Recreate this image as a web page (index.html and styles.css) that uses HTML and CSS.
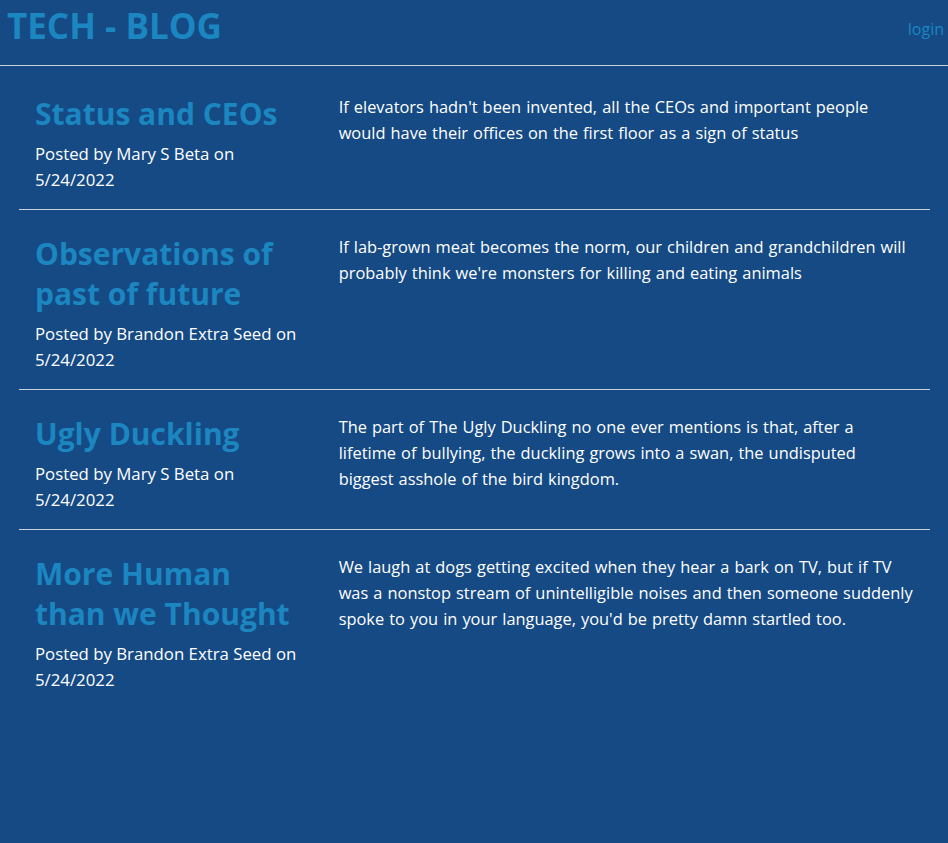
FILE: index.html
```html
<!DOCTYPE html>
<html lang="en">
<head>
<meta charset="utf-8">
<title>Tech - Blog</title>
<link rel="stylesheet" href="styles.css">
</head>
<body>
<header class="site-header">
  <h1 class="brand">TECH - BLOG</h1>
  <nav class="nav"><a class="nav-link" href="#">login</a></nav>
</header>
<main class="posts">
  <article class="post">
    <div class="post-meta">
      <h2 class="post-title">Status and CEOs</h2>
      <p class="post-by">Posted by Mary S Beta on 5/24/2022</p>
    </div>
    <p class="post-body">If elevators hadn't been invented, all the CEOs and important people would have their offices on the first floor as a sign of status</p>
  </article>
  <article class="post">
    <div class="post-meta">
      <h2 class="post-title">Observations of past of future</h2>
      <p class="post-by">Posted by Brandon Extra Seed on 5/24/2022</p>
    </div>
    <p class="post-body">If lab-grown meat becomes the norm, our children and grandchildren will probably think we're monsters for killing and eating animals</p>
  </article>
  <article class="post">
    <div class="post-meta">
      <h2 class="post-title">Ugly Duckling</h2>
      <p class="post-by">Posted by Mary S Beta on 5/24/2022</p>
    </div>
    <p class="post-body">The part of The Ugly Duckling no one ever mentions is that, after a lifetime of bullying, the duckling grows into a swan, the undisputed biggest asshole of the bird kingdom.</p>
  </article>
  <article class="post">
    <div class="post-meta">
      <h2 class="post-title">More Human than we Thought</h2>
      <p class="post-by">Posted by Brandon Extra Seed on 5/24/2022</p>
    </div>
    <p class="post-body">We laugh at dogs getting excited when they hear a bark on TV, but if TV was a nonstop stream of unintelligible noises and then someone suddenly spoke to you in your language, you'd be pretty damn startled too.</p>
  </article>
</main>
</body>
</html>
```
FILE: styles.css
```css
html, body {
  margin: 0;
  padding: 0;
}
body {
  background: #154a85;
  color: #ffffff;
  font-family: "Open Sans", "Noto Sans", sans-serif;
  min-height: 843px;
}
.site-header {
  display: flex;
  justify-content: space-between;
  align-items: flex-start;
  height: 65px;
  border-bottom: 1px solid #c9d1dd;
  padding: 0 4px 0 7px;
}
.brand {
  margin: 0;
  font-size: 35px;
  line-height: 52px;
  font-weight: 700;
  color: #1b86c0;
}
.nav {
  padding-top: 16px;
}
.nav-link {
  color: #1b86c0;
  text-decoration: none;
  font-size: 16px;
  line-height: 26px;
}
.posts {
  padding: 4px 18px 0 19px;
}
.post {
  display: grid;
  grid-template-columns: 1fr 2fr;
  padding: 24px 0 16px;
  border-bottom: 1px solid #c9d1dd;
}
.post:last-child {
  border-bottom: none;
}
.post-meta {
  padding: 0 16px;
}
.post-title {
  margin: 0;
  font-size: 30px;
  line-height: 40px;
  font-weight: 700;
  color: #1b86c0;
}
.post-by {
  margin: 7px 0 0;
  font-size: 16.8px;
  line-height: 26px;
}
.post-body {
  margin: 0;
  padding: 0 16px;
  font-size: 16.4px;
  word-spacing: 0.79px;
  line-height: 26px;
}
```
